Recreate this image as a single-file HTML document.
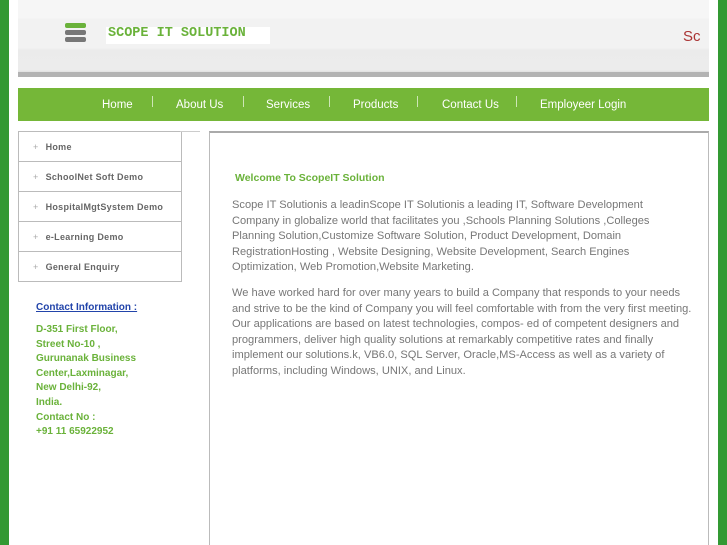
<!DOCTYPE html>
<html><head><style>
html,body{margin:0;width:727px;height:545px;overflow:hidden}
body{background:#fff;position:relative;font-family:"Liberation Sans",sans-serif}
.gl{position:absolute;left:0;top:0;width:9px;height:545px;background:#339933}
.gr{position:absolute;left:718px;top:0;width:9px;height:545px;background:#339933}
.hd{position:absolute;left:18px;top:0;width:691px;height:72px;background:linear-gradient(#f6f6f6 0,#f6f6f6 18px,#f2f2f2 19px,#f2f2f2 48px,#ebebeb 50px,#ececec 70px,#e0e0e0 72px)}
.hl{position:absolute;left:18px;top:72px;width:691px;height:5px;background:#b3b3b3}
.logo{position:absolute;left:106px;top:27px;width:162px;height:17px;background:#fff;font-family:"Liberation Mono",monospace;color:#6ab23a;font-size:13.5px;font-weight:bold;line-height:13px;padding-left:2px}
.ic{position:absolute;left:65px;width:21px;height:5px;border-radius:2px;background:#777}
.sc{position:absolute;left:683px;top:28px;color:#a33;font-size:15px}
.nav{position:absolute;left:18px;top:88px;width:691px;height:33px;background:#75b738;color:#fff;font-size:11.5px}
.nav span{position:absolute;top:11px}
.nav i{position:absolute;top:8px;width:1px;height:11px;background:#cde6b6}
.menu{position:absolute;left:18px;top:131px;width:162px;border:1px solid #bbb;border-bottom:none}
.menu div{height:29px;border-bottom:1px solid #bbb;font-size:9px;font-weight:bold;color:#666;line-height:30px;padding-left:14px;letter-spacing:.3px}
.menu div:before{content:"+";color:#aaa;font-weight:normal;margin-right:7px}
.tl{position:absolute;left:180px;top:131px;width:20px;height:1px;background:#ccc}
.ct{position:absolute;left:36px;top:302px;font-size:10px;font-weight:bold;color:#2244aa;text-decoration:underline}
.ad{position:absolute;left:36px;top:323px;font-size:10px;font-weight:bold;color:#6ab23a;line-height:14.6px}
.box{position:absolute;left:209px;top:131px;width:498px;height:420px;border:1px solid #bbb;border-top:2px solid #aaa}
.wt{position:absolute;left:235px;top:172px;font-size:10.5px;font-weight:bold;color:#6ab23a}
.p{position:absolute;left:232px;width:470px;font-size:11.1px;color:#777;line-height:15.5px;white-space:nowrap}
</style></head><body>
<div class="gl"></div><div class="gr"></div>
<div class="hd"></div><div class="hl"></div>
<div class="ic" style="top:23px;background:#6ab23a"></div>
<div class="ic" style="top:30px"></div>
<div class="ic" style="top:37px"></div>
<div class="logo">SCOPE IT SOLUTION</div>
<div class="sc">Sc</div>
<div class="nav">
<span style="left:84px">Home</span><i style="left:134px"></i>
<span style="left:158px">About Us</span><i style="left:225px"></i>
<span style="left:248px">Services</span><i style="left:311px"></i>
<span style="left:335px">Products</span><i style="left:399px"></i>
<span style="left:424px">Contact Us</span><i style="left:498px"></i>
<span style="left:522px">Employeer Login</span>
</div>
<div class="menu"><div>Home</div><div>SchoolNet Soft Demo</div><div>HospitalMgtSystem Demo</div><div>e-Learning Demo</div><div>General Enquiry</div></div>
<div class="tl"></div>
<div class="ct">Contact Information :</div>
<div class="ad">D-351 First Floor,<br>Street No-10 ,<br>Gurunanak Business<br>Center,Laxminagar,<br>New Delhi-92,<br>India.<br>Contact No :<br>+91 11 65922952</div>
<div class="box"></div>
<div class="wt">Welcome To ScopeIT Solution</div>
<div class="p" style="top:198px">Scope IT Solutionis a leadinScope IT Solutionis a leading IT, Software Development<br>Company in globalize world that facilitates you ,Schools Planning Solutions ,Colleges<br>Planning Solution,Customize Software Solution, Product Development, Domain<br>RegistrationHosting , Website Designing, Website Development, Search Engines<br>Optimization, Web Promotion,Website Marketing.</div>
<div class="p" style="top:286px">We have worked hard for over many years to build a Company that responds to your needs<br>and strive to be the kind of Company you will feel comfortable with from the very first meeting.<br>Our applications are based on latest technologies, compos- ed of competent designers and<br>programmers, deliver high quality solutions at remarkably competitive rates and finally<br>implement our solutions.k, VB6.0, SQL Server, Oracle,MS-Access as well as a variety of<br>platforms, including Windows, UNIX, and Linux.</div>
</body></html>
